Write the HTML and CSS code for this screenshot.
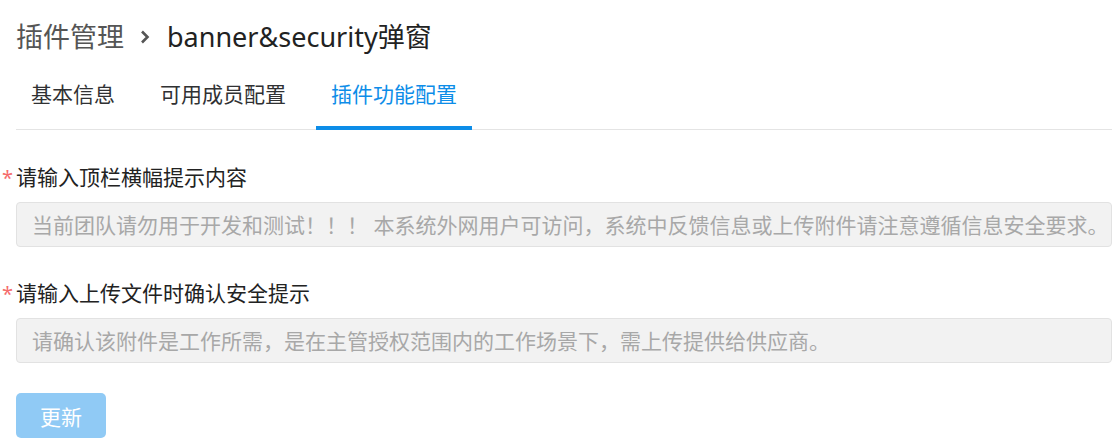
FILE: index.html
```html
<!DOCTYPE html>
<html lang="zh-CN">
<head>
<meta charset="utf-8">
<title>banner&amp;security弹窗</title>
<link rel="stylesheet" href="styles.css">
</head>
<body>
<div class="page">
  <div class="crumb">
    <span class="crumb-parent">插件管理</span>
    <svg class="crumb-sep" width="10" height="14" viewBox="0 0 10 14"><path d="M2 1.5 L7.5 7 L2 12.5" fill="none" stroke="#555" stroke-width="2.6"/></svg>
    <span class="crumb-current">banner&amp;security弹窗</span>
  </div>
  <div class="tabs">
    <div class="tab">基本信息</div>
    <div class="tab">可用成员配置</div>
    <div class="tab active">插件功能配置</div>
  </div>
  <form class="form">
    <div class="item first">
      <label class="label"><span class="star">*</span>请输入顶栏横幅提示内容</label>
      <input class="input" type="text" disabled placeholder="当前团队请勿用于开发和测试！！！ 本系统外网用户可访问，系统中反馈信息或上传附件请注意遵循信息安全要求。">
    </div>
    <div class="item">
      <label class="label"><span class="star">*</span>请输入上传文件时确认安全提示</label>
      <input class="input" type="text" disabled placeholder="请确认该附件是工作所需，是在主管授权范围内的工作场景下，需上传提供给供应商。">
    </div>
    <button class="btn" type="button" disabled>更新</button>
  </form>
</div>
</body>
</html>
```
FILE: styles.css
```css
html, body {
  margin: 0;
  padding: 0;
  background: #fff;
  overflow: hidden;
}
body {
  font-family: "Noto Sans", "Noto Sans CJK SC", sans-serif;
  color: #222;
}
.page {
  padding-left: 16px;
  width: 1096px;
}
.crumb {
  display: flex;
  align-items: center;
  padding-top: 19px;
  height: 36px;
  font-size: 27px;
  line-height: 36px;
}
.crumb-parent {
  color: #555;
}
.crumb-sep {
  margin: 0 17px 0 16px;
}
.crumb-current {
  color: #222;
}
.tabs {
  display: flex;
  margin-top: 5px;
  border-bottom: 1px solid #e4e4e4;
}
.tab {
  position: relative;
  padding: 0 15px;
  margin-right: 15px;
  height: 69px;
  line-height: 69px;
  font-size: 21px;
  color: #303133;
}
.tab.active {
  color: #0d8de8;
}
.tab.active::after {
  content: "";
  position: absolute;
  left: 0;
  right: 0;
  bottom: -1px;
  height: 4px;
  background: #0d8de8;
}
.form {
  display: flex;
  flex-direction: column;
  align-items: flex-start;
}
.item {
  display: flex;
  flex-direction: column;
  gap: 9px;
  width: 100%;
  margin-top: 31px;
}
.item.first {
  margin-top: 32px;
}
.label {
  font-size: 21px;
  line-height: 30px;
  color: #222;
  margin-left: -14px;
}
.star {
  color: #f56c6c;
  margin-right: 3px;
  font-size: 20px;
}
.input {
  box-sizing: border-box;
  width: 100%;
  height: 45px;
  margin: 0;
  padding: 0 15px;
  border: 1px solid #e2e2e2;
  border-radius: 4px;
  background: #f2f2f2;
  font-family: "Noto Sans", "Noto Sans CJK SC", sans-serif;
  font-size: 21px;
  color: #a8a8a8;
  outline: none;
}
.input::placeholder {
  color: #a8a8a8;
  opacity: 1;
}
.btn {
  margin-top: 30px;
  width: 90px;
  height: 45px;
  border: none;
  border-radius: 5px;
  background: #90caf5;
  color: #fff;
  font-family: "Noto Sans", "Noto Sans CJK SC", sans-serif;
  font-size: 21px;
  padding: 0;
}
```
